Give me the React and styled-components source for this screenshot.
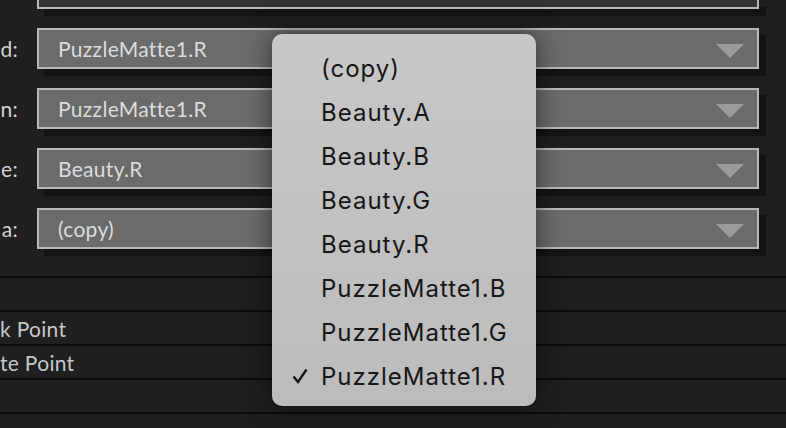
import React from 'react';
import styled, { createGlobalStyle } from 'styled-components';

const GlobalStyle = createGlobalStyle`
	html, body {
		margin: 0;
		padding: 0;
		background: #1f1f1f;
		overflow: hidden;
	}
`;

const Page = styled.div`
	position: relative;
	width: 786px;
	height: 428px;
	overflow: hidden;
	background: #1f1f1f;
	font-family: Lato, 'Open Sans', sans-serif;
`;

const Form = styled.div`
	display: grid;
	grid-template-columns: 37px 722px;
	row-gap: 19px;
	padding-bottom: 27px;
`;

const Label = styled.div`
	display: flex;
	justify-content: flex-end;
	align-items: center;
	white-space: nowrap;
	padding-right: 19px;
	color: #d0d0d0;
	font-size: 21px;
	letter-spacing: 0.3px;
`;

const Field = styled.div`
	position: relative;
	display: flex;
	align-items: center;
	box-sizing: border-box;
	height: ${(p) => (p.$clipped ? '9px' : '41px')};
	padding: 0 13px 0 19px;
	border: 2px solid #b8b8b8;
	border-top-width: ${(p) => (p.$clipped ? '0' : '2px')};
	background: ${(p) => (p.$clipped ? '#343434' : '#6b6b6b')};
	box-shadow: 7px 7px 0 #131313;
	color: #dcdcdc;
	font-size: 21px;
	letter-spacing: 0.3px;
`;

const Value = styled.span`
	flex: 1;
	white-space: nowrap;
`;

const Arrow = styled.span`
	width: 0;
	height: 0;
	margin-top: 5px;
	border-left: 14px solid transparent;
	border-right: 14px solid transparent;
	border-top: 14px solid #9b9b9b;
`;

const List = styled.div`
	border-top: 2px solid #0b0b0b;
`;

const Row = styled.div`
	display: flex;
	align-items: center;
	height: 32px;
	border-bottom: 2px solid #0b0b0b;
	color: #c8c8c8;
	font-size: 21px;
	letter-spacing: 0.3px;
	white-space: nowrap;
`;

const Menu = styled.div`
	position: absolute;
	left: 272px;
	top: 34px;
	width: 264px;
	height: 372px;
	box-sizing: border-box;
	padding-top: 12px;
	border-radius: 10px;
	background: linear-gradient(#c7c7c7, #bcbcbc);
	box-shadow: 0 0 24px rgba(0, 0, 0, 0.55);
	font-family: Inter, 'Liberation Sans', sans-serif;
`;

const Item = styled.div`
	position: relative;
	display: flex;
	align-items: center;
	height: 44px;
	padding-left: 49px;
	color: #171717;
	font-size: 24px;
	letter-spacing: 1px;
`;

const Check = styled.svg`
	position: absolute;
	left: 20px;
	top: 14px;
`;

// the panel is cropped at the left edge: only the tail of each label shows
const channels = [
	{ label: 'd:', value: 'PuzzleMatte1.R' },
	{ label: 'n:', value: 'PuzzleMatte1.R' },
	{ label: 'e:', value: 'Beauty.R' },
	{ label: 'a:', value: '(copy)' },
];

const options = [
	'(copy)',
	'Beauty.A',
	'Beauty.B',
	'Beauty.G',
	'Beauty.R',
	'PuzzleMatte1.B',
	'PuzzleMatte1.G',
	'PuzzleMatte1.R',
];

const rows = ['', 'k Point', 'te Point', '', ''];

export default function App() {
	return (
		<Page>
			<GlobalStyle />
			<Form>
				<Label />
				<Field $clipped />
				{channels.map((c) => (
					<React.Fragment key={c.label}>
						<Label>{c.label}</Label>
						<Field>
							<Value>{c.value}</Value>
							<Arrow />
						</Field>
					</React.Fragment>
				))}
			</Form>
			<List>
				{rows.map((r, i) => (
					<Row key={i}>{r}</Row>
				))}
			</List>
			<Menu>
				{options.map((o) => (
					<Item key={o}>
						{o === 'PuzzleMatte1.R' && (
							<Check width="16" height="16" viewBox="0 0 16 16">
								<polyline
									points="1.5,8.5 6,14 14.5,1.5"
									fill="none"
									stroke="#171717"
									strokeWidth="2.4"
								/>
							</Check>
						)}
						{o}
					</Item>
				))}
			</Menu>
		</Page>
	);
}
